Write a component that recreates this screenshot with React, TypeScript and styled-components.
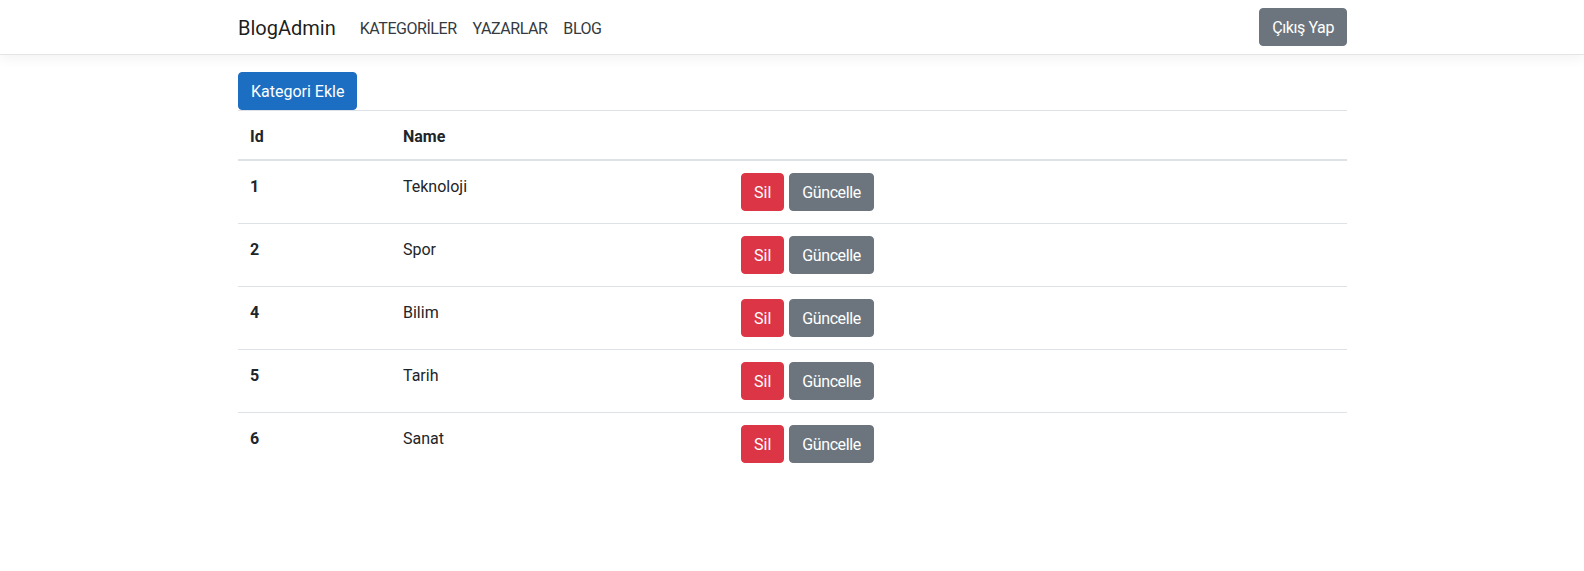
import React from "react";
import styled, { createGlobalStyle } from "styled-components";

const GlobalStyle = createGlobalStyle`
  * { box-sizing: border-box; }
  html, body { margin: 0; padding: 0; background: #fff; }
  body {
    font-family: "Segoe UI", Roboto, "Noto Sans", "Liberation Sans", Arial, sans-serif;
    font-size: 16px;
    line-height: 1.5;
    color: #212529;
  }
`;

const Nav = styled.nav`
  background: #fff;
  border-bottom: 1px solid #e5e5e5;
  box-shadow: 0 4px 12px rgba(0, 0, 0, 0.05);
  margin-bottom: 17px;
`;

const Container = styled.div`
  width: 1140px;
  margin: 0 auto;
  padding: 0 15px 0 16px;
`;

const NavInner = styled(Container)`
  display: flex;
  align-items: center;
  height: 54px;
`;

const Brand = styled.a`
  font-size: 20px;
  line-height: 30px;
  padding-top: 2px;
  color: rgba(0, 0, 0, 0.9);
  margin-right: 16px;
  text-decoration: none;
`;

const NavLinks = styled.ul`
  display: flex;
  list-style: none;
  margin: 0;
  padding: 0;
  flex: 1;
`;

const NavLink = styled.a`
  display: block;
  padding: 10px 8px 6px;
  color: #343a40;
  text-decoration: none;
  font-size: 16px;
  letter-spacing: -0.45px;
`;

type Variant = "primary" | "danger" | "secondary";
const colors: Record<Variant, string> = {
  primary: "#1b6ec2",
  danger: "#dc3545",
  secondary: "#6c757d",
};

const Button = styled.button<{ $variant: Variant; $tight?: boolean }>`
  display: inline-block;
  font-family: inherit;
  font-size: 16px;
  line-height: 24px;
  padding: 7px 12px 5px;
  border-radius: 4px;
  border: 1px solid ${(p) => colors[p.$variant]};
  background: ${(p) => colors[p.$variant]};
  color: #fff;
  letter-spacing: ${(p) => (p.$tight ? "-0.4px" : "normal")};
  cursor: pointer;
`;

const Table = styled.table`
  width: 100%;
  border-collapse: collapse;
  color: #212529;
`;

const Th = styled.th<{ $w?: number }>`
  text-align: left;
  vertical-align: bottom;
  padding: 14px 12px 10px;
  border-top: 1px solid #dee2e6;
  border-bottom: 2px solid #dee2e6;
  font-weight: 700;
  width: ${(p) => (p.$w ? `${p.$w}px` : "auto")};
`;

const RowHead = styled.th`
  text-align: left;
  vertical-align: top;
  padding: 14px 12px 10px;
  border-top: 1px solid #dee2e6;
  font-weight: 700;
`;

const Td = styled.td<{ $actions?: boolean }>`
  vertical-align: top;
  padding: ${(p) => (p.$actions ? "12px" : "14px 12px 10px")};
  border-top: 1px solid #dee2e6;
`;

const Actions = styled.div`
  display: flex;
  gap: 5px;
`;

const rows = [
  { id: 1, name: "Teknoloji" },
  { id: 2, name: "Spor" },
  { id: 4, name: "Bilim" },
  { id: 5, name: "Tarih" },
  { id: 6, name: "Sanat" },
];

export default function App() {
  return (
    <>
      <GlobalStyle />
      <Nav>
        <NavInner>
          <Brand href="#">BlogAdmin</Brand>
          <NavLinks>
            <li><NavLink href="#">KATEGORİLER</NavLink></li>
            <li><NavLink href="#">YAZARLAR</NavLink></li>
            <li><NavLink href="#">BLOG</NavLink></li>
          </NavLinks>
          <Button $variant="secondary" $tight>Çıkış Yap</Button>
        </NavInner>
      </Nav>
      <Container>
        <Button $variant="primary">Kategori Ekle</Button>
        <Table>
          <thead>
            <tr>
              <Th $w={153}>Id</Th>
              <Th $w={338}>Name</Th>
              <Th></Th>
            </tr>
          </thead>
          <tbody>
            {rows.map((r) => (
              <tr key={r.id}>
                <RowHead>{r.id}</RowHead>
                <Td>{r.name}</Td>
                <Td $actions>
                  <Actions>
                    <Button $variant="danger">Sil</Button>
                    <Button $variant="secondary" $tight>Güncelle</Button>
                  </Actions>
                </Td>
              </tr>
            ))}
          </tbody>
        </Table>
      </Container>
    </>
  );
}
